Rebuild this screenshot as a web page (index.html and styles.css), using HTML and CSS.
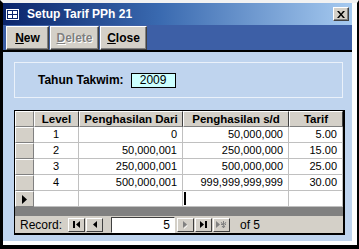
FILE: index.html
```html
<!DOCTYPE html>
<html>
<head>
<meta charset="utf-8">
<link rel="stylesheet" href="styles.css">
</head>
<body>
<div class="win">
  <div class="inner">
    <div class="titlebar">
      <svg class="ticon" width="13" height="11" viewBox="0 0 13 11">
        <rect x="0.5" y="0.5" width="12" height="10" fill="#fff" stroke="#fff"/>
        <rect x="1" y="1" width="11" height="9" fill="#0a246a"/>
        <rect x="2" y="2" width="4" height="3" fill="#fff"/>
        <rect x="7" y="2" width="4" height="3" fill="#fff"/>
        <rect x="2" y="6" width="4" height="3" fill="#fff"/>
        <rect x="7" y="6" width="4" height="3" fill="#fff"/>
      </svg>
      <span class="title">Setup Tarif PPh 21</span>
      <span class="xbtn">
        <svg width="8" height="7" viewBox="0 0 8 7"><path d="M0 0h2l2 2.5L6 0h2L5 3.5 8 7H6L4 4.5 2 7H0l3-3.5z" fill="#000"/></svg>
      </span>
    </div>
    <div class="toolbar">
      <div class="tbtn b-new"><u>N</u>ew</div>
      <div class="tbtn b-del disabled"><u>D</u>elete</div>
      <div class="tbtn b-close"><u>C</u>lose</div>
    </div>
    <div class="body">
      <div class="panel">
        <span class="lbl">Tahun Takwim:</span>
        <span class="yearbox">2009</span>
      </div>
      <div class="sheet">
        <div class="row head">
          <div class="sel"></div>
          <div class="hc">Level</div>
          <div class="hc">Penghasilan Dari</div>
          <div class="hc">Penghasilan s/d</div>
          <div class="hc">Tarif</div>
        </div>
        <div class="row">
          <div class="sel"></div><div class="c ctr">1</div><div class="c">0</div><div class="c">50,000,000</div><div class="c">5.00</div>
        </div>
        <div class="row">
          <div class="sel"></div><div class="c ctr">2</div><div class="c">50,000,001</div><div class="c">250,000,000</div><div class="c">15.00</div>
        </div>
        <div class="row">
          <div class="sel"></div><div class="c ctr">3</div><div class="c">250,000,001</div><div class="c">500,000,000</div><div class="c">25.00</div>
        </div>
        <div class="row">
          <div class="sel"></div><div class="c ctr">4</div><div class="c">500,000,001</div><div class="c">999,999,999,999</div><div class="c">30.00</div>
        </div>
        <div class="row">
          <div class="sel cur"><svg width="5" height="9" viewBox="0 0 5 9"><path d="M0 0L5 4.5 0 9z" fill="#000"/></svg></div>
          <div class="c"></div><div class="c"></div><div class="c left"><span class="caret"></span></div><div class="c"></div>
        </div>
        <div class="empty"></div>
        <div class="nav">
          <span class="rec">Record:</span>
          <span class="nb nb1"><svg width="7" height="7" viewBox="0 0 7 7"><path d="M0 0h2v7H0zM7 0v7L3 3.5z" fill="#000"/></svg></span>
          <span class="nb"><svg width="4" height="7" viewBox="0 0 4 7"><path d="M4 0v7L0 3.5z" fill="#000"/></svg></span>
          <span class="recbox">5</span>
          <span class="nb dis"><svg width="5" height="8" viewBox="0 0 5 8"><path d="M0 0l4 3.5L0 7z" fill="#808080"/><path d="M1 8l4-3.5-1 0L1 7z" fill="#fff"/></svg></span>
          <span class="nb"><svg width="7" height="7" viewBox="0 0 7 7"><path d="M0 0l4 3.5L0 7zM5 0h2v7H5z" fill="#000"/></svg></span>
          <span class="nb dis"><svg width="11" height="8" viewBox="0 0 11 8"><path d="M0 0l4 3.5L0 7z" fill="#808080"/><path d="M7 0h1v7H7zM5 3h5v1H5zM5.5 1l4 5-.8.6-4-5zM9.5 1l-4 5 .8.6 4-5z" fill="#808080"/></svg></span>
          <span class="of">of 5</span>
        </div>
      </div>
    </div>
  </div>
</div>
</body>
</html>
```
FILE: styles.css
```css
* { box-sizing: border-box; }
html, body { margin: 0; padding: 0; background: #000; }
body { width: 359px; height: 249px; overflow: hidden; font-family: "Liberation Sans", Arial, sans-serif; }

.win {
  width: 359px; height: 249px;
  border-top: 3px solid #f2f2f2;
  border-left: 3px solid #000;
  border-right: 2px solid #000;
  border-bottom: 4px solid #000;
  background: #fff;
}
.inner {
  height: 100%;
  border-right: 5px solid #fff;
  border-bottom: 4px solid #fff;
  display: flex; flex-direction: column;
  background: #bfd4ee;
}

.titlebar {
  height: 22px; flex: none;
  background: linear-gradient(to right, #0a246a 0%, #3a6ab0 45%, #a6caf0 100%);
  display: flex; align-items: center;
  padding-left: 3px; padding-right: 3px;
}
.ticon { margin-right: 8px; }
.title { color: #fff; font-weight: bold; font-size: 12px; flex: 1; }
.xbtn {
  width: 16px; height: 14px;
  background: #d4d0c8;
  border-top: 1px solid #fff; border-left: 1px solid #fff;
  border-right: 1px solid #404040; border-bottom: 1px solid #404040;
  box-shadow: inset -1px -1px 0 #808080;
  display: flex; align-items: center; justify-content: center;
}

.toolbar {
  height: 27px; flex: none;
  background: #3d5fa6;
  border-bottom: 2px solid #000;
  display: flex; padding: 1px 0 0 3px;
}
.tbtn {
  height: 24px;
  background: #d4d0c8;
  border-top: 1px solid #fff; border-left: 1px solid #fff;
  border-right: 1px solid #404040; border-bottom: 1px solid #404040;
  box-shadow: inset -1px -1px 0 #808080;
  font-weight: bold; font-size: 12px; color: #000;
  display: flex; align-items: center; justify-content: center;
  margin-right: 1px;
}
.tbtn u { text-decoration: underline; }
.b-new { width: 43px; }
.b-del { width: 49px; }
.b-close { width: 47px; }
.disabled { color: #808080; text-shadow: 1px 1px 0 #fff; }

.body { flex: 1; padding: 10px 7px 0 11px; }
.panel {
  height: 36px; width: 329px;
  border: 1px solid #eaf1fa;
  display: flex; align-items: center;
  padding-left: 23px;
}
.lbl { font-weight: bold; font-size: 12px; color: #000; margin-right: 7px; }
.yearbox {
  width: 45px; height: 15px;
  background: #ccffff;
  border: 1px solid #000;
  font-size: 12px; text-align: center; line-height: 13px;
}

.sheet {
  margin-top: 12px;
  width: 331px; height: 125px;
  border: 1px solid #000;
  border-right-width: 2px; border-bottom-width: 2px;
  background: #808080;
  display: flex; flex-direction: column;
}
.row {
  display: grid;
  grid-template-columns: 19px 45px 104px 106px 54px;
  height: 16px; flex: none;
  background: #fff;
}
.sel {
  background: #d4d0c8;
  border-top: 1px solid #fff; border-left: 1px solid #fff;
  border-right: 1px solid #808080; border-bottom: 1px solid #808080;
  display: flex; align-items: center; justify-content: center;
}
.hc {
  background: #d4d0c8;
  border-top: 1px solid #fff; border-left: 1px solid #fff;
  border-right: 1px solid #404040; border-bottom: 1px solid #808080;
  font-weight: bold; font-size: 11.5px; text-align: center; line-height: 14px;
  white-space: nowrap;
}
.c {
  border-right: 1px solid #c0c0c0; border-bottom: 1px solid #c0c0c0;
  font-size: 11px; line-height: 15px; text-align: right; padding-right: 5px;
  white-space: nowrap; color: #000;
}
.c.ctr { text-align: center; padding-right: 0; }
.c.left { text-align: left; padding: 1px 0 0 1px; }
.caret { display: block; width: 2px; height: 13px; background: #000; }

.empty { height: 9px; flex: none; background: #808080; }
.nav {
  flex: 1;
  background: #d4d0c8;
  display: flex; align-items: center;
  font-size: 11px; color: #000;
  padding-left: 5px;
}
.rec { font-size: 12px; margin-right: 6px; }
.nb {
  width: 17px; height: 14px; flex: none;
  background: #d4d0c8;
  border-top: 1px solid #fff; border-left: 1px solid #fff;
  border-right: 1px solid #404040; border-bottom: 1px solid #404040;
  display: flex; align-items: center; justify-content: center;
  margin-right: 1px;
}
.nb1 { margin-left: 0; }
.recbox {
  width: 64px; height: 16px; flex: none;
  background: #fff;
  border-top: 1px solid #404040; border-left: 1px solid #404040;
  border-right: 1px solid #fff; border-bottom: 1px solid #fff;
  font-size: 12px; text-align: right; padding-right: 4px; line-height: 14px;
  margin: 0 2px 0 7px;
}
.of { font-size: 12px; margin-left: 9px; }
```
